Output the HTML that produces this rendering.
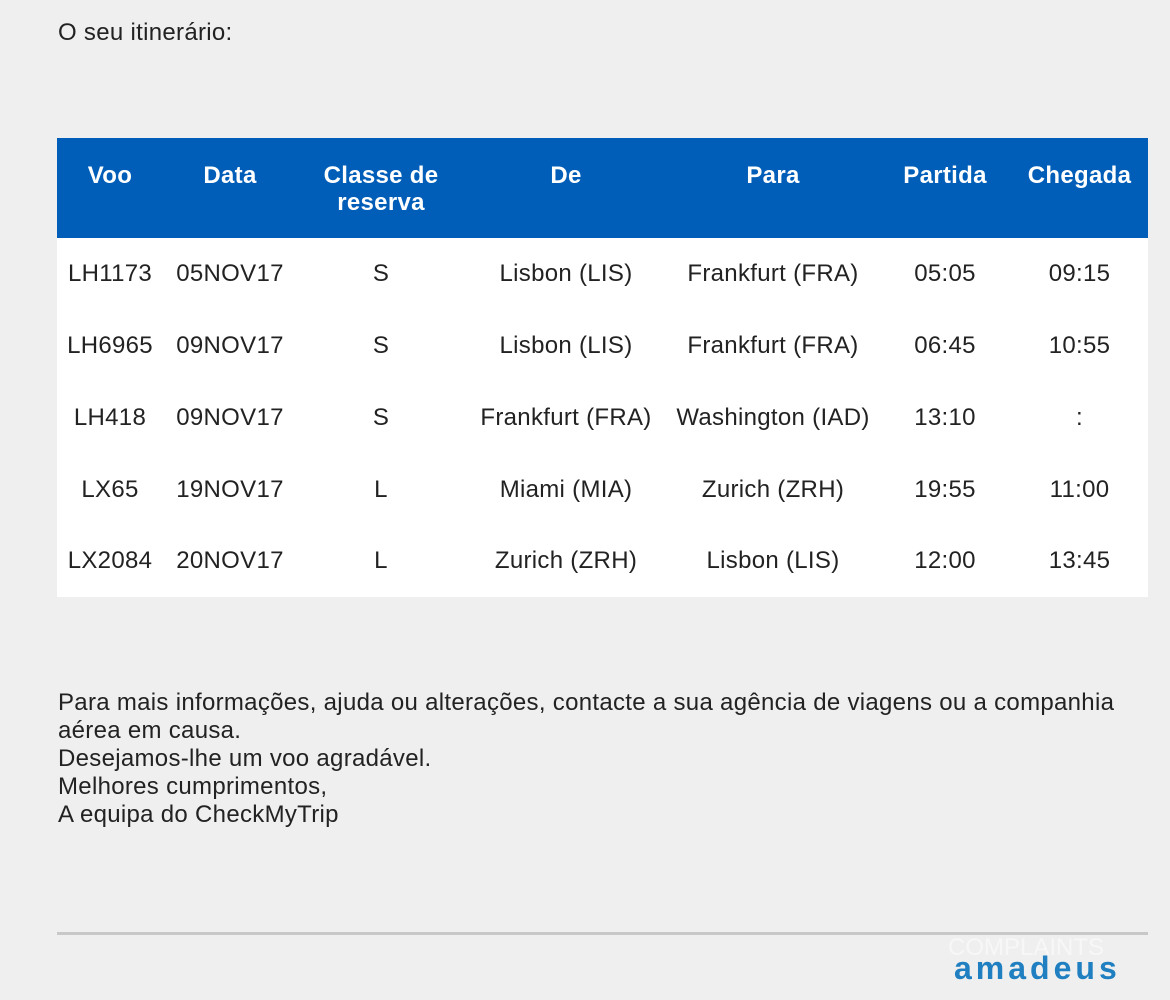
<!DOCTYPE html>
<html><head><meta charset="utf-8"><style>
body{margin:0;width:1170px;height:1000px;background:#efefef;font-family:"Liberation Sans",Arial,sans-serif;color:#222;position:relative;overflow:hidden;font-size:24px;letter-spacing:0.3px}
.t{position:absolute;left:58px}
.hd{position:absolute;left:57px;top:138px;width:1091px;height:100px;background:#005eb8}
.bd{position:absolute;left:57px;top:238px;width:1091px;height:359px;background:#fff}
.r{position:absolute;left:57px;width:1091px;display:flex;line-height:27px}
.r div{text-align:center;white-space:nowrap}
.h{color:#fff;font-weight:bold}
.c1{width:106px}.c2{width:134px}.c3{width:168px}.c4{width:202px}.c5{width:212px}.c6{width:132px}.c7{width:137px}
</style></head><body>
<div class="t" style="top:19px">O seu itinerário:</div>
<div class="hd"></div>
<div class="bd"></div>
<div class="r h" style="top:162px"><div class="c1">Voo</div><div class="c2">Data</div><div class="c3">Classe de<br>reserva</div><div class="c4">De</div><div class="c5">Para</div><div class="c6">Partida</div><div class="c7">Chegada</div></div>
<div class="r" style="top:260px"><div class="c1">LH1173</div><div class="c2">05NOV17</div><div class="c3">S</div><div class="c4">Lisbon (LIS)</div><div class="c5">Frankfurt (FRA)</div><div class="c6">05:05</div><div class="c7">09:15</div></div>
<div class="r" style="top:332px"><div class="c1">LH6965</div><div class="c2">09NOV17</div><div class="c3">S</div><div class="c4">Lisbon (LIS)</div><div class="c5">Frankfurt (FRA)</div><div class="c6">06:45</div><div class="c7">10:55</div></div>
<div class="r" style="top:404px"><div class="c1">LH418</div><div class="c2">09NOV17</div><div class="c3">S</div><div class="c4">Frankfurt (FRA)</div><div class="c5">Washington (IAD)</div><div class="c6">13:10</div><div class="c7">:</div></div>
<div class="r" style="top:476px"><div class="c1">LX65</div><div class="c2">19NOV17</div><div class="c3">L</div><div class="c4">Miami (MIA)</div><div class="c5">Zurich (ZRH)</div><div class="c6">19:55</div><div class="c7">11:00</div></div>
<div class="r" style="top:547px"><div class="c1">LX2084</div><div class="c2">20NOV17</div><div class="c3">L</div><div class="c4">Zurich (ZRH)</div><div class="c5">Lisbon (LIS)</div><div class="c6">12:00</div><div class="c7">13:45</div></div>
<div class="t" style="top:689px;line-height:28px;width:1080px">Para mais informações, ajuda ou alterações, contacte a sua agência de viagens ou a companhia aérea em causa.<br>Desejamos-lhe um voo agradável.<br>Melhores cumprimentos,<br>A equipa do CheckMyTrip</div>
<div style="position:absolute;left:57px;top:932px;width:1091px;height:3px;background:#c8c8c8"></div>
<div style="position:absolute;left:948px;top:934px;font-size:24px;color:#f7f7f7;letter-spacing:0">COMPLAINTS</div>
<div style="position:absolute;left:954px;top:950px;font-size:32px;font-weight:bold;color:#1f7fc0;letter-spacing:4px;line-height:36px">amadeus</div>
</body></html>
